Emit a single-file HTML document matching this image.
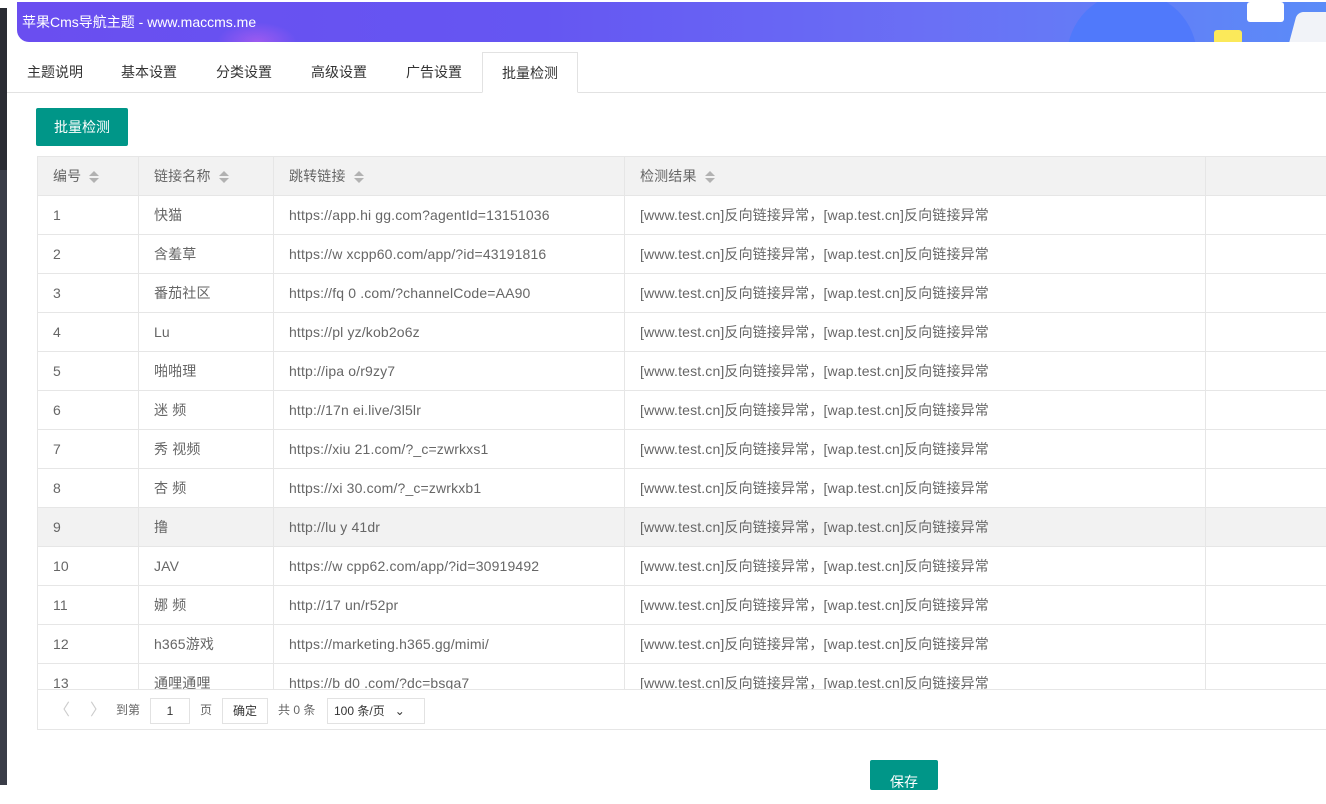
<!DOCTYPE html>
<html><head><meta charset="utf-8"><style>
*{margin:0;padding:0;box-sizing:border-box}
body{width:1326px;height:785px;overflow:hidden;background:#fff;font-family:"Liberation Sans","Noto Sans CJK SC",sans-serif;font-size:14px;color:#666;position:relative}
.lstrip{position:absolute;left:0;top:8px;width:7px;height:162px;background:#2a2c33}
.lstrip2{position:absolute;left:0;top:170px;width:7px;height:615px;background:#3a3d48}
.main{position:absolute;left:7px;top:0;right:0;bottom:0;background:#fff}
.banner{position:absolute;left:10px;top:2px;width:1309px;height:40px;border-bottom-left-radius:12px;background:linear-gradient(90deg,#6a4ef0 0%,#6556f2 40%,#6a70f5 70%,#5b8cf8 100%);overflow:hidden}
.banner span{position:absolute;left:5px;top:10px;color:#fff;font-size:14px}
.glow{position:absolute;left:200px;top:20px;width:80px;height:40px;border-radius:50%;background:radial-gradient(#c060f0,transparent 70%);opacity:.6}
.circ{position:absolute;left:1050px;top:-10px;width:130px;height:130px;border-radius:50%;background:#5079fb}
.cup{position:absolute;left:1197px;top:28px;width:28px;height:14px;background:#fbe95a;border-radius:3px}
.bub{position:absolute;left:1230px;top:0;width:37px;height:20px;background:#fff;border-radius:3px}
.lap{position:absolute;left:1275px;top:10px;width:60px;height:40px;background:#f1f3f8;border-radius:6px;transform:skewX(-15deg)}
.tabs{position:absolute;left:0;top:52px;width:1319px;height:41px;border-bottom:1px solid #e2e2e2}
.tab{position:absolute;top:0;height:41px;line-height:40px;color:#333;font-size:14px}
.tab.on{border:1px solid #e2e2e2;border-bottom:1px solid #fff;background:#fff;height:41px;padding:0 19px}
.btn{position:absolute;left:29px;top:108px;width:92px;height:38px;background:#009688;color:#fff;text-align:center;line-height:38px;border-radius:2px;font-size:14px}
.tbl{position:absolute;left:30px;top:156px;width:1300px;height:574px;border:1px solid #e6e6e6;overflow:hidden}
table{border-collapse:collapse;position:absolute;left:-1px;top:-1px}
td,th{border:1px solid #e6e6e6;height:39px;padding:0 15px;text-align:left;font-weight:normal;white-space:nowrap;color:#666;font-size:14px;letter-spacing:0.15px}
th{background:#f2f2f2;color:#666}
tr.h td{background:#f2f2f2}
.sort{display:inline-block;vertical-align:middle;margin-left:8px;width:10px;height:14px;position:relative}
.sort:before{content:"";position:absolute;left:0;top:1px;border:5px solid transparent;border-bottom:5px solid #b2b2b2;border-top:0}
.sort:after{content:"";position:absolute;left:0;top:8px;border:5px solid transparent;border-top:5px solid #b2b2b2;border-bottom:0}
.body{position:absolute;left:0;top:39px;width:1300px;height:493px;overflow:hidden}
.pager{position:absolute;left:0;top:532px;width:1300px;height:41px;border-top:1px solid #e6e6e6;background:#fff;font-size:12px;color:#666}
.pager span{position:absolute;top:0;line-height:41px}
.box{position:absolute;top:8px;height:26px;border:1px solid #e2e2e2;line-height:24px;text-align:center;font-size:12px;color:#333}
.save{position:absolute;left:863px;top:760px;width:68px;height:30px;background:#009688;border-radius:2px;color:#fff;text-align:center;line-height:44px}
</style></head><body>
<div class="lstrip"></div><div class="lstrip2"></div>
<div class="main">
<div class="banner"><div class="glow"></div><div class="circ"></div><div class="cup"></div><div class="bub"></div><div class="lap"></div><span>苹果Cms导航主题 - www.maccms.me</span></div>
<div class="tabs">
<div class="tab" style="left:20px">主题说明</div>
<div class="tab" style="left:114px">基本设置</div>
<div class="tab" style="left:209px">分类设置</div>
<div class="tab" style="left:304px">高级设置</div>
<div class="tab" style="left:399px">广告设置</div>
<div class="tab on" style="left:475px">批量检测</div>
</div>
<div class="btn">批量检测</div>
<div class="tbl">
<table style="width:1301px">
<colgroup><col style="width:101px"><col style="width:135px"><col style="width:351px"><col style="width:581px"><col></colgroup>
<tr><th>编号<i class="sort"></i></th><th>链接名称<i class="sort"></i></th><th>跳转链接<i class="sort"></i></th><th>检测结果<i class="sort"></i></th><th></th></tr>
</table>
<div class="body"><table style="width:1301px">
<colgroup><col style="width:101px"><col style="width:135px"><col style="width:351px"><col style="width:581px"><col></colgroup>
<tr><td>1</td><td>快猫</td><td>https://app.hi  gg.com?agentId=13151036</td><td>[www.test.cn]反向链接异常，[wap.test.cn]反向链接异常</td><td style="border-right:0"></td></tr>
<tr><td>2</td><td>含羞草</td><td>https://w    xcpp60.com/app/?id=43191816</td><td>[www.test.cn]反向链接异常，[wap.test.cn]反向链接异常</td><td></td></tr>
<tr><td>3</td><td>番茄社区</td><td>https://fq  0  .com/?channelCode=AA90</td><td>[www.test.cn]反向链接异常，[wap.test.cn]反向链接异常</td><td></td></tr>
<tr><td>4</td><td>Lu</td><td>https://pl    yz/kob2o6z</td><td>[www.test.cn]反向链接异常，[wap.test.cn]反向链接异常</td><td></td></tr>
<tr><td>5</td><td>啪啪理</td><td>http://ipa    o/r9zy7</td><td>[www.test.cn]反向链接异常，[wap.test.cn]反向链接异常</td><td></td></tr>
<tr><td>6</td><td>迷   频</td><td>http://17n    ei.live/3l5lr</td><td>[www.test.cn]反向链接异常，[wap.test.cn]反向链接异常</td><td></td></tr>
<tr><td>7</td><td>秀   视频</td><td>https://xiu   21.com/?_c=zwrkxs1</td><td>[www.test.cn]反向链接异常，[wap.test.cn]反向链接异常</td><td></td></tr>
<tr><td>8</td><td>杏   频</td><td>https://xi    30.com/?_c=zwrkxb1</td><td>[www.test.cn]反向链接异常，[wap.test.cn]反向链接异常</td><td></td></tr>
<tr class="h"><td>9</td><td>撸</td><td>http://lu    y 41dr</td><td>[www.test.cn]反向链接异常，[wap.test.cn]反向链接异常</td><td></td></tr>
<tr><td>10</td><td>JAV</td><td>https://w    cpp62.com/app/?id=30919492</td><td>[www.test.cn]反向链接异常，[wap.test.cn]反向链接异常</td><td></td></tr>
<tr><td>11</td><td>娜   频</td><td>http://17   un/r52pr</td><td>[www.test.cn]反向链接异常，[wap.test.cn]反向链接异常</td><td></td></tr>
<tr><td>12</td><td>h365游戏</td><td>https://marketing.h365.gg/mimi/</td><td>[www.test.cn]反向链接异常，[wap.test.cn]反向链接异常</td><td></td></tr>
<tr><td>13</td><td>通哩通哩</td><td>https://b  d0 .com/?dc=bsga7</td><td>[www.test.cn]反向链接异常，[wap.test.cn]反向链接异常</td><td></td></tr>
</table></div>
<div class="pager">
<span style="left:16px;color:#ccc;font-size:16px">〈</span>
<span style="left:52px;color:#ccc;font-size:16px">〉</span>
<span style="left:78px">到第</span>
<div class="box" style="left:112px;width:40px">1</div>
<span style="left:162px">页</span>
<div class="box" style="left:184px;width:46px">确定</div>
<span style="left:240px">共 0 条</span>
<div class="box" style="left:289px;width:98px;text-align:left;padding-left:6px">100 条/页 &nbsp;&nbsp;⌄</div>
</div>
</div>
<div class="save">保存</div>
</div>
</body></html>
